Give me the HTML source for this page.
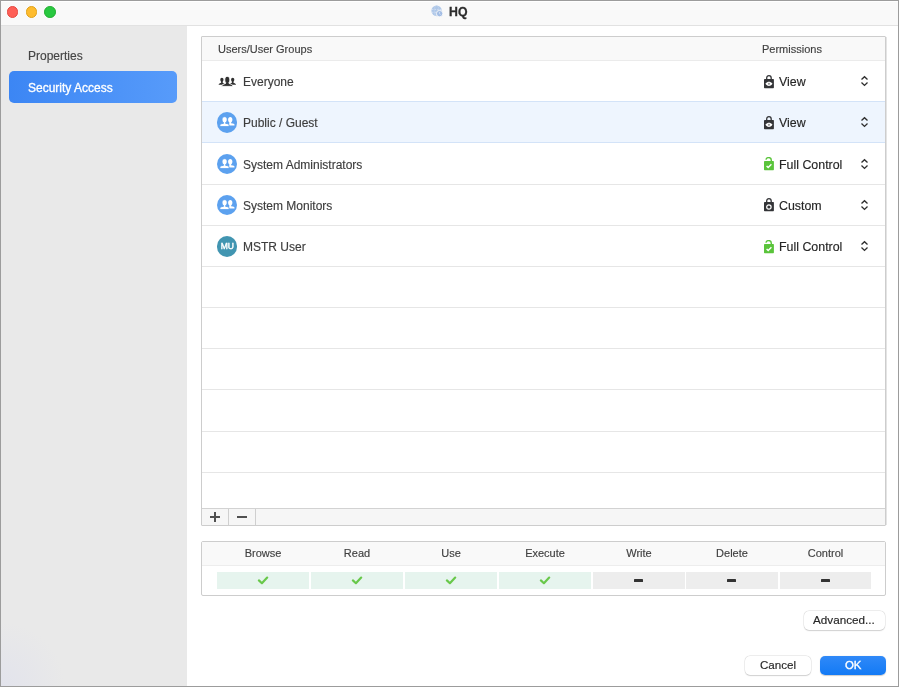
<!DOCTYPE html>
<html><head><meta charset="utf-8">
<style>
*{margin:0;padding:0;box-sizing:border-box}
html,body{width:899px;height:687px;overflow:hidden;background:#fff;font-family:"Liberation Sans",sans-serif;position:relative}
.a{position:absolute}
.t{position:absolute;white-space:nowrap;line-height:1;will-change:transform;-webkit-text-stroke:0.15px currentColor}
.tl{position:absolute;width:11.7px;height:11.7px;border-radius:50%}
.hl{position:absolute;height:1px}
.vl{position:absolute;width:1px}
.nm{font-size:12px;color:#3d3d3d}
.pm{font-size:12.4px;color:#262626}
.circ{position:absolute;left:216.8px;width:20.5px;height:20.5px;border-radius:50%;background:#5ca1ef}
.cell{position:absolute;top:572.4px;height:16.4px;width:92px}
.cg{background:#e6f4ee}
.cy{background:#ededed}
.ph{font-size:11px;color:#404040;text-align:center;width:92px}
.btn{position:absolute;background:#fff;border-radius:5px;box-shadow:0 0 0 0.5px rgba(0,0,0,0.10),0 0.8px 1.2px rgba(0,0,0,0.14)}
</style></head><body>
<!-- window background -->
<div class="a" style="left:0;top:0;width:899px;height:687px;background:#fff"></div>
<!-- title bar -->
<div class="a" style="left:0;top:0;width:899px;height:26px;background:linear-gradient(#fff 0,#fff 2px,#f9f9f9 2px);border-bottom:1px solid #e2e2e2"></div>
<div class="tl" style="left:6.7px;top:6px;background:#fe5f57;border:0.5px solid #e5473f"></div>
<div class="tl" style="left:25.5px;top:6px;background:#febc2e;border:0.5px solid #e0a116"></div>
<div class="tl" style="left:44.2px;top:6px;background:#28c840;border:0.5px solid #1dad2b"></div>
<svg class="a" style="left:431px;top:5px" width="12" height="12" viewBox="0 0 12 12">
  <circle cx="5.6" cy="5.8" r="5.2" fill="#aec7e8"/>
  <g stroke="#dbe6f5" stroke-width="0.75" fill="none" stroke-dasharray="1.6 1.1">
    <path d="M0.8 4.4 H10.4 M0.8 7.3 H10.4"/>
  </g>
  <ellipse cx="5.6" cy="5.8" rx="2.3" ry="5.1" stroke="#c5d6ee" stroke-width="0.6" fill="none"/>
  <circle cx="8.6" cy="8.6" r="3.2" fill="#a2bde5" stroke="#f7f7f7" stroke-width="0.9"/>
  <path d="M8.6 6.9 V8.7 L9.5 9.7" stroke="#e3ecf8" stroke-width="0.7" fill="none"/>
</svg>
<div class="t" style="left:448.6px;top:6px;font-size:12.3px;font-weight:bold;color:#2c2c2c;-webkit-text-stroke:0.3px #2c2c2c">HQ</div>

<!-- sidebar -->
<div class="a" style="left:0;top:26px;width:187px;height:661px;background:radial-gradient(circle at 0 100%,rgba(226,227,236,1) 0,rgba(233,233,233,0) 65px),#e9e9e9"></div>
<div class="t" style="left:27.6px;top:49.8px;font-size:12px;color:#454545">Properties</div>
<div class="a" style="left:9px;top:71px;width:168px;height:32px;border-radius:5px;background:linear-gradient(90deg,#3c86f4,#579bfa)"></div>
<div class="t" style="left:27.6px;top:81.8px;font-size:12px;color:#fff;-webkit-text-stroke:0.3px #fff">Security Access</div>

<!-- users table -->
<div class="a" style="left:201px;top:36px;width:685px;height:490px;border:1px solid #cdcdcd;border-radius:1px;background:#fff"></div>
<div class="a" style="left:202px;top:37px;width:683px;height:23px;background:#f9f9f9"></div>
<div class="hl" style="left:202px;top:60px;width:683px;background:#ebebeb"></div>
<div class="t" style="left:218px;top:43.7px;font-size:11px;color:#3f3f3f">Users/User Groups</div>
<div class="t" style="left:762px;top:43.7px;font-size:11px;color:#3f3f3f">Permissions</div>

<!-- selected row -->
<div class="a" style="left:202px;top:101px;width:683px;height:42px;background:#eef5fe;border-top:1px solid #d3e3f8;border-bottom:1px solid #d3e3f8"></div>
<div class="hl" style="left:202px;top:184px;width:683px;background:#e6e6e6"></div>
<div class="hl" style="left:202px;top:225px;width:683px;background:#e6e6e6"></div>
<div class="hl" style="left:202px;top:266px;width:683px;background:#e6e6e6"></div>
<div class="hl" style="left:202px;top:307px;width:683px;background:#e6e6e6"></div>
<div class="hl" style="left:202px;top:348px;width:683px;background:#e6e6e6"></div>
<div class="hl" style="left:202px;top:389px;width:683px;background:#e6e6e6"></div>
<div class="hl" style="left:202px;top:431px;width:683px;background:#e6e6e6"></div>
<div class="hl" style="left:202px;top:472px;width:683px;background:#e6e6e6"></div>

<div class="vl" style="left:886px;top:37px;height:488px;background:#e4e4e4"></div>
<!-- footer -->
<div class="a" style="left:202px;top:508px;width:683px;height:17px;background:#f6f6f6;border-top:1px solid #d2d2d2"></div>
<div class="vl" style="left:228px;top:509px;height:16px;background:#cfcfcf"></div>
<div class="vl" style="left:255px;top:509px;height:16px;background:#cfcfcf"></div>
<div class="a" style="left:209.8px;top:516.4px;width:10.4px;height:1.2px;background:#505050"></div>
<div class="a" style="left:214.4px;top:511.8px;width:1.2px;height:10.2px;background:#505050"></div>
<div class="a" style="left:237px;top:516.4px;width:10.2px;height:1.2px;background:#505050"></div>

<!-- rows content -->
<!--ROWS-->
<div class="a" style="left:0;top:60px;width:899px;height:41px">
<svg class="a" style="left:218px;top:16px" width="19" height="11" viewBox="0 0 19 11">
<path fill="#303030" d="M0.6 8.8 C0.6 7.6 2.3 7.1 3.1 6.7 L3.1 5.8 C2.5 5.3 2.3 4.6 2.3 3.6 C2.3 2.5 3 1.8 3.9 1.8 C4.8 1.8 5.5 2.5 5.5 3.6 C5.5 4.6 5.3 5.3 4.7 5.8 L4.7 6.7 C5.5 7.1 7 7.5 7 8.8 Z"/>
<path fill="#303030" d="M18 8.8 C18 7.6 16.3 7.1 15.5 6.7 L15.5 5.8 C16.1 5.3 16.3 4.6 16.3 3.6 C16.3 2.5 15.6 1.8 14.7 1.8 C13.8 1.8 13.1 2.5 13.1 3.6 C13.1 4.6 13.3 5.3 13.9 5.8 L13.9 6.7 C13.1 7.1 11.6 7.5 11.6 8.8 Z"/>
<path fill="#303030" stroke="#fff" stroke-width="0.9" d="M3.6 10.4 C3.6 8.6 6.2 8 7.5 7.5 L7.6 6.4 C6.9 5.8 6.8 4.8 6.8 3.2 C6.8 1.4 7.8 0.4 9.3 0.4 C10.8 0.4 11.8 1.4 11.8 3.2 C11.8 4.8 11.7 5.8 11 6.4 L11.1 7.5 C12.4 8 15 8.6 15 10.4 Z"/>
</svg>
<div class="t nm" style="left:242.6px;top:16.2px">Everyone</div>
<svg class="a" style="left:764px;top:14.6px" width="10" height="14" viewBox="0 0 10 14">
<path d="M2.7 5 V3.0 C2.7 1.5 3.7 0.7 4.95 0.7 C6.2 0.7 7.2 1.5 7.2 3.0 V5" fill="none" stroke="#333437" stroke-width="1.3"/>
<rect x="0" y="4.1" width="9.9" height="9.1" rx="0.7" fill="#333437"/>
<path d="M1.4 8.8 C2.6 7.1 3.8 6.7 4.95 6.7 C6.1 6.7 7.3 7.1 8.5 8.8 C7.3 10.5 6.1 10.9 4.95 10.9 C3.8 10.9 2.6 10.5 1.4 8.8 Z" fill="#fff"/>
<circle cx="4.95" cy="8.8" r="1.1" fill="#9a9a9a"/>
</svg>
<div class="t pm" style="left:779px;top:16px">View</div>
<svg class="a" style="left:860px;top:15px" width="9" height="12" viewBox="0 0 9 12">
<path d="M1.5 4.4 L4.5 1.7 L7.5 4.4 M1.5 7.6 L4.5 10.4 L7.5 7.6" fill="none" stroke="#2e2e2e" stroke-width="1.35"/>
</svg>
</div>
<div class="a" style="left:0;top:101px;width:899px;height:41px">
<div class="circ" style="top:11px"></div>
<svg class="a" style="left:217px;top:11px" width="20" height="20" viewBox="0 0 20 20">
<path fill="#fff" d="M11.8 13.6 V12.2 C11.8 11.8 12.1 11.6 12.4 11.5 V10.4 C11.6 9.8 11.1 8.8 11.1 7.4 C11.1 5.8 12 4.9 13.25 4.9 C14.5 4.9 15.4 5.8 15.4 7.4 C15.4 8.8 14.9 9.8 14.1 10.4 V11.3 L15.9 11.6 C16.9 11.8 17.5 12.2 17.5 12.9 V13.6 Z"/>
<path fill="#fff" stroke="#5ca1ef" stroke-width="0.9" d="M2.9 14.6 V13.3 C2.9 12.3 3.7 11.9 4.7 11.7 L6.6 11.3 V10.6 C5.6 10 5.05 8.9 5.05 7.4 C5.05 5.7 6.1 4.7 7.6 4.7 C9.1 4.7 10.15 5.7 10.15 7.4 C10.15 8.9 9.6 10 8.6 10.6 V11.3 L10.5 11.7 C11.5 11.9 12.1 12.3 12.1 13.3 V14.6 Z"/>
</svg>
<div class="t nm" style="left:242.6px;top:16.2px">Public / Guest</div>
<svg class="a" style="left:764px;top:14.6px" width="10" height="14" viewBox="0 0 10 14">
<path d="M2.7 5 V3.0 C2.7 1.5 3.7 0.7 4.95 0.7 C6.2 0.7 7.2 1.5 7.2 3.0 V5" fill="none" stroke="#333437" stroke-width="1.3"/>
<rect x="0" y="4.1" width="9.9" height="9.1" rx="0.7" fill="#333437"/>
<path d="M1.4 8.8 C2.6 7.1 3.8 6.7 4.95 6.7 C6.1 6.7 7.3 7.1 8.5 8.8 C7.3 10.5 6.1 10.9 4.95 10.9 C3.8 10.9 2.6 10.5 1.4 8.8 Z" fill="#fff"/>
<circle cx="4.95" cy="8.8" r="1.1" fill="#9a9a9a"/>
</svg>
<div class="t pm" style="left:779px;top:16px">View</div>
<svg class="a" style="left:860px;top:15px" width="9" height="12" viewBox="0 0 9 12">
<path d="M1.5 4.4 L4.5 1.7 L7.5 4.4 M1.5 7.6 L4.5 10.4 L7.5 7.6" fill="none" stroke="#2e2e2e" stroke-width="1.35"/>
</svg>
</div>
<div class="a" style="left:0;top:142.5px;width:899px;height:41px">
<div class="circ" style="top:11px"></div>
<svg class="a" style="left:217px;top:11px" width="20" height="20" viewBox="0 0 20 20">
<path fill="#fff" d="M11.8 13.6 V12.2 C11.8 11.8 12.1 11.6 12.4 11.5 V10.4 C11.6 9.8 11.1 8.8 11.1 7.4 C11.1 5.8 12 4.9 13.25 4.9 C14.5 4.9 15.4 5.8 15.4 7.4 C15.4 8.8 14.9 9.8 14.1 10.4 V11.3 L15.9 11.6 C16.9 11.8 17.5 12.2 17.5 12.9 V13.6 Z"/>
<path fill="#fff" stroke="#5ca1ef" stroke-width="0.9" d="M2.9 14.6 V13.3 C2.9 12.3 3.7 11.9 4.7 11.7 L6.6 11.3 V10.6 C5.6 10 5.05 8.9 5.05 7.4 C5.05 5.7 6.1 4.7 7.6 4.7 C9.1 4.7 10.15 5.7 10.15 7.4 C10.15 8.9 9.6 10 8.6 10.6 V11.3 L10.5 11.7 C11.5 11.9 12.1 12.3 12.1 13.3 V14.6 Z"/>
</svg>
<div class="t nm" style="left:242.6px;top:16.2px">System Administrators</div>
<svg class="a" style="left:764px;top:14.6px" width="10" height="14" viewBox="0 0 10 14">
<path d="M1.9 2.6 C2.3 1.3 3.4 0.6 4.7 0.6 C6.2 0.6 7.3 1.6 7.3 3.2 V5" fill="none" stroke="#5ac43b" stroke-width="1.45"/>
<rect x="0" y="4.1" width="9.9" height="9.1" rx="0.7" fill="#5ac43b"/>
<path d="M2.6 8.9 L4.2 10.5 L7.4 7.3" fill="none" stroke="#fff" stroke-width="1.4"/>
</svg>
<div class="t pm" style="left:779px;top:16px">Full Control</div>
<svg class="a" style="left:860px;top:15px" width="9" height="12" viewBox="0 0 9 12">
<path d="M1.5 4.4 L4.5 1.7 L7.5 4.4 M1.5 7.6 L4.5 10.4 L7.5 7.6" fill="none" stroke="#2e2e2e" stroke-width="1.35"/>
</svg>
</div>
<div class="a" style="left:0;top:183.75px;width:899px;height:41px">
<div class="circ" style="top:11px"></div>
<svg class="a" style="left:217px;top:11px" width="20" height="20" viewBox="0 0 20 20">
<path fill="#fff" d="M11.8 13.6 V12.2 C11.8 11.8 12.1 11.6 12.4 11.5 V10.4 C11.6 9.8 11.1 8.8 11.1 7.4 C11.1 5.8 12 4.9 13.25 4.9 C14.5 4.9 15.4 5.8 15.4 7.4 C15.4 8.8 14.9 9.8 14.1 10.4 V11.3 L15.9 11.6 C16.9 11.8 17.5 12.2 17.5 12.9 V13.6 Z"/>
<path fill="#fff" stroke="#5ca1ef" stroke-width="0.9" d="M2.9 14.6 V13.3 C2.9 12.3 3.7 11.9 4.7 11.7 L6.6 11.3 V10.6 C5.6 10 5.05 8.9 5.05 7.4 C5.05 5.7 6.1 4.7 7.6 4.7 C9.1 4.7 10.15 5.7 10.15 7.4 C10.15 8.9 9.6 10 8.6 10.6 V11.3 L10.5 11.7 C11.5 11.9 12.1 12.3 12.1 13.3 V14.6 Z"/>
</svg>
<div class="t nm" style="left:242.6px;top:16.2px">System Monitors</div>
<svg class="a" style="left:764px;top:14.6px" width="10" height="14" viewBox="0 0 10 14">
<path d="M2.7 5 V3.0 C2.7 1.5 3.7 0.7 4.95 0.7 C6.2 0.7 7.2 1.5 7.2 3.0 V5" fill="none" stroke="#333437" stroke-width="1.3"/>
<rect x="0" y="4.1" width="9.9" height="9.1" rx="0.7" fill="#333437"/>
<circle cx="4.9" cy="9" r="2.2" fill="none" stroke="#fff" stroke-width="1.2"/>
<circle cx="4.9" cy="9" r="0.9" fill="#333437"/>
</svg>
<div class="t pm" style="left:779px;top:16px">Custom</div>
<svg class="a" style="left:860px;top:15px" width="9" height="12" viewBox="0 0 9 12">
<path d="M1.5 4.4 L4.5 1.7 L7.5 4.4 M1.5 7.6 L4.5 10.4 L7.5 7.6" fill="none" stroke="#2e2e2e" stroke-width="1.35"/>
</svg>
</div>
<div class="a" style="left:0;top:225px;width:899px;height:41px">
<div class="circ" style="top:11.2px;background:#4195b1"></div>
<div class="t" style="left:217px;top:17.4px;width:20.5px;text-align:center;font-size:8.5px;font-weight:normal;color:#fff;-webkit-text-stroke:0.4px #fff;letter-spacing:-0.15px">MU</div>
<div class="t nm" style="left:242.6px;top:16.2px">MSTR User</div>
<svg class="a" style="left:764px;top:14.6px" width="10" height="14" viewBox="0 0 10 14">
<path d="M1.9 2.6 C2.3 1.3 3.4 0.6 4.7 0.6 C6.2 0.6 7.3 1.6 7.3 3.2 V5" fill="none" stroke="#5ac43b" stroke-width="1.45"/>
<rect x="0" y="4.1" width="9.9" height="9.1" rx="0.7" fill="#5ac43b"/>
<path d="M2.6 8.9 L4.2 10.5 L7.4 7.3" fill="none" stroke="#fff" stroke-width="1.4"/>
</svg>
<div class="t pm" style="left:779px;top:16px">Full Control</div>
<svg class="a" style="left:860px;top:15px" width="9" height="12" viewBox="0 0 9 12">
<path d="M1.5 4.4 L4.5 1.7 L7.5 4.4 M1.5 7.6 L4.5 10.4 L7.5 7.6" fill="none" stroke="#2e2e2e" stroke-width="1.35"/>
</svg>
</div>
<!--/ROWS-->

<!-- permissions box -->
<div class="a" style="left:201px;top:541px;width:685px;height:54.5px;border:1px solid #cdcdcd;border-radius:2px;background:#fff"></div>
<div class="a" style="left:202px;top:542px;width:683px;height:23px;background:#f9f9f9"></div>
<div class="hl" style="left:202px;top:565px;width:683px;background:#ededed"></div>

<!--PERMS-->
<div class="t ph" style="left:217px;top:548px;width:92px">Browse</div>
<div class="cell cg" style="left:217px;width:92px"></div>
<svg class="a" style="left:257.0px;top:575px" width="12" height="11" viewBox="0 0 12 11"><path d="M1.9 5.4 L4.9 8.2 L10.2 2.6" fill="none" stroke="#68c84a" stroke-width="2.2" stroke-linecap="round" stroke-linejoin="round"/></svg>
<div class="t ph" style="left:311px;top:548px;width:92px">Read</div>
<div class="cell cg" style="left:311px;width:92px"></div>
<svg class="a" style="left:351.0px;top:575px" width="12" height="11" viewBox="0 0 12 11"><path d="M1.9 5.4 L4.9 8.2 L10.2 2.6" fill="none" stroke="#68c84a" stroke-width="2.2" stroke-linecap="round" stroke-linejoin="round"/></svg>
<div class="t ph" style="left:405px;top:548px;width:92px">Use</div>
<div class="cell cg" style="left:405px;width:92px"></div>
<svg class="a" style="left:445.0px;top:575px" width="12" height="11" viewBox="0 0 12 11"><path d="M1.9 5.4 L4.9 8.2 L10.2 2.6" fill="none" stroke="#68c84a" stroke-width="2.2" stroke-linecap="round" stroke-linejoin="round"/></svg>
<div class="t ph" style="left:498.5px;top:548px;width:92px">Execute</div>
<div class="cell cg" style="left:498.5px;width:92px"></div>
<svg class="a" style="left:538.5px;top:575px" width="12" height="11" viewBox="0 0 12 11"><path d="M1.9 5.4 L4.9 8.2 L10.2 2.6" fill="none" stroke="#68c84a" stroke-width="2.2" stroke-linecap="round" stroke-linejoin="round"/></svg>
<div class="t ph" style="left:592.5px;top:548px;width:92px">Write</div>
<div class="cell cy" style="left:592.5px;width:92px"></div>
<div class="a" style="left:633.8px;top:578.9px;width:9.2px;height:2.9px;background:#333;border-radius:0.6px"></div>
<div class="t ph" style="left:686px;top:548px;width:92px">Delete</div>
<div class="cell cy" style="left:686px;width:92px"></div>
<div class="a" style="left:727.3px;top:578.9px;width:9.2px;height:2.9px;background:#333;border-radius:0.6px"></div>
<div class="t ph" style="left:780px;top:548px;width:91px">Control</div>
<div class="cell cy" style="left:780px;width:91px"></div>
<div class="a" style="left:820.8px;top:578.9px;width:9.2px;height:2.9px;background:#333;border-radius:0.6px"></div>
<!--/PERMS-->

<!-- buttons -->
<div class="btn" style="left:804px;top:610.5px;width:81px;height:19px"></div>
<div class="t" style="left:813px;top:614.2px;font-size:11.7px;color:#262626">Advanced...</div>
<div class="btn" style="left:745px;top:655.5px;width:66px;height:19px"></div>
<div class="t" style="left:760px;top:659.2px;font-size:11.6px;color:#262626">Cancel</div>
<div class="a" style="left:820px;top:655.5px;width:66px;height:19px;border-radius:5px;background:linear-gradient(#2f89f8,#137af5);box-shadow:0 0.5px 1px rgba(0,0,0,0.2)"></div>
<div class="t" style="left:844.6px;top:659.6px;font-size:11.4px;color:#fff;-webkit-text-stroke:0.35px #fff">OK</div>

<!-- window border -->
<div class="a" style="left:0;top:0;width:899px;height:687px;border:1px solid #9c9c9c"></div>
</body></html>
